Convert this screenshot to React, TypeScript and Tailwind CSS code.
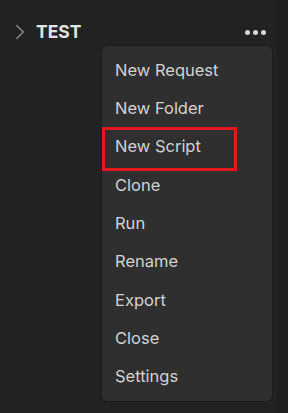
import { ChevronRight } from 'lucide-react';

const items = [
  'New Request',
  'New Folder',
  'New Script',
  'Clone',
  'Run',
  'Rename',
  'Export',
  'Close',
  'Settings',
];

export default function App() {
  return (
    <div
      className="flex h-[413px] w-[288px] overflow-hidden bg-[#222222]"
      style={{ fontFamily: 'Inter, "Noto Sans", sans-serif' }}
    >
      <div className="relative flex-1">
        {/* Collection header */}
        <div className="flex h-[64px] items-center pl-[7px] pr-[12px]">
          <ChevronRight className="h-[26px] w-[26px] text-[#8c8c8c]" strokeWidth={1.3} />
          <span className="ml-[3px] text-[17.5px] font-bold text-[#e2e2e2]">TEST</span>
          <div className="ml-auto flex items-center gap-[3px]">
            <span className="h-[5px] w-[5px] rounded-full bg-[#d6d6d6]" />
            <span className="h-[5px] w-[5px] rounded-full bg-[#d6d6d6]" />
            <span className="h-[5px] w-[5px] rounded-full bg-[#d6d6d6]" />
          </div>
        </div>

        {/* Context menu */}
        <div className="absolute left-[102px] top-[46px] w-[170px] rounded-[5px] bg-[#2f2f2f] py-[5px] shadow-[0_0_0_1px_#1c1c1c]">
          {items.map((item) => (
            <div key={item} className="flex h-[38.3px] items-center px-[13px] text-[16.5px] text-[#d2d2d2]">
              {item}
            </div>
          ))}
        </div>

        {/* Highlight annotation */}
        <div className="absolute left-[102px] top-[127px] h-[44px] w-[135px] border-[3px] border-[#e3191f]" />
      </div>
      <div className="w-[10px] border-l border-[#1c1c1c] bg-[#202020]" />
    </div>
  );
}
